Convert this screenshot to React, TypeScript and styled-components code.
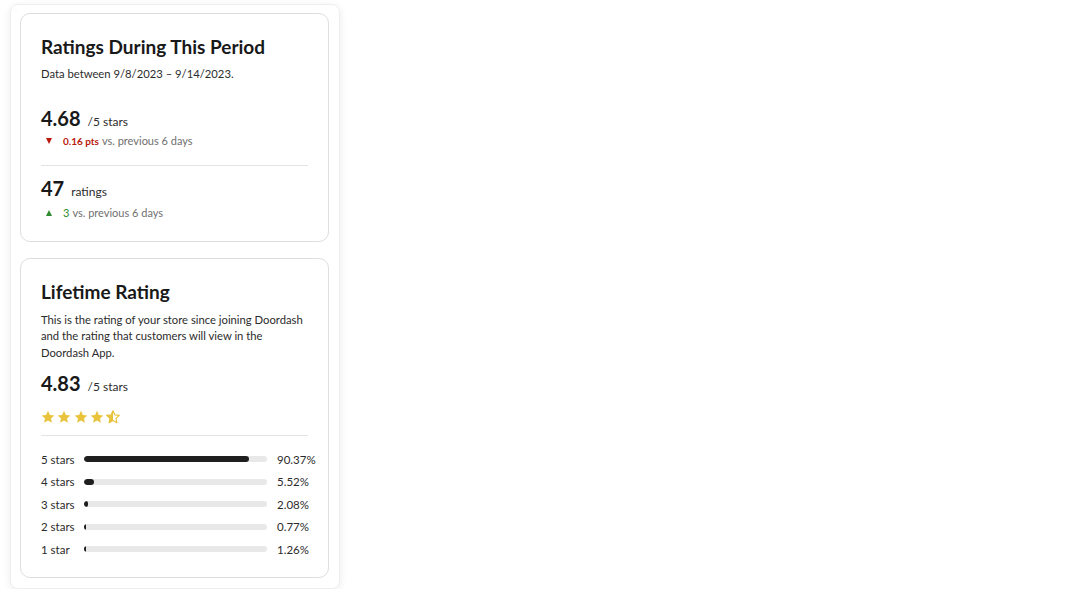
import React from 'react';
import styled, { createGlobalStyle } from 'styled-components';

const GlobalStyle = createGlobalStyle`
    body {
        margin: 0;
        background: #ffffff;
        font-family: "Lato", "Noto Sans", sans-serif;
        color: #191919;
    }
`

const Panel = styled.div`
    margin: 4px 0 0 10px;
    width: 330px;
    box-sizing: border-box;
    padding: 8px 10px 10px 9px;
    border-radius: 8px;
    border: 1px solid #eeeeee;
    box-shadow: 0 2px 8px rgba(0, 0, 0, 0.08);
    display: flex;
    flex-direction: column;
    gap: 16px;
`

const Card = styled.section`
    border: 1px solid #dedede;
    border-radius: 10px;
    padding: 20px 20px 21px;
`

const Title = styled.h2`
    margin: 0;
    font-size: 19px;
    font-weight: 700;
    line-height: 25px;
`

const Description = styled.p<{ $top: number }>`
    margin: ${p => p.$top}px 0 0;
    font-size: 11.25px;
    line-height: 16.5px;
    color: #2b2b2b;
`

const Score = styled.div<{ $top: number }>`
    margin-top: ${p => p.$top}px;
    font-size: 20px;
    line-height: 24px;
    height: 24px;
`

const Big = styled.span`
    font-weight: 700;
`

const Unit = styled.span`
    margin-left: 7px;
    font-size: 12px;
    line-height: 1;
    color: #2b2b2b;
`

const Change = styled.div<{ $top: number }>`
    margin-top: ${p => p.$top}px;
    padding-left: 5px;
    display: flex;
    align-items: center;
    font-size: 11px;
    line-height: 14px;
    color: #6f6f6f;
`

const Arrow = styled.span<{ $color: string; $up?: boolean }>`
    width: 0;
    height: 0;
    margin-right: 11px;
    border-left: 3.5px solid transparent;
    border-right: 3.5px solid transparent;
    ${p => p.$up
        ? `border-bottom: 6px solid ${p.$color};`
        : `border-top: 6px solid ${p.$color};`}
`

const Delta = styled.span<{ $color: string; $bold?: boolean }>`
    color: ${p => p.$color};
    font-weight: ${p => (p.$bold ? 700 : 400)};
    font-size: ${p => (p.$bold ? 10 : 11)}px;
    margin-right: 3px;
`

const Divider = styled.hr<{ $top: number }>`
    border: none;
    border-top: 1px solid #e4e4e4;
    margin: ${p => p.$top}px 0 0;
`

const Stars = styled.div`
    margin-top: 15px;
    display: flex;
    gap: 2.3px;
    height: 14px;
`

const Bars = styled.div`
    margin-top: 16px;
    display: flex;
    flex-direction: column;
    gap: 8.5px;
`

const BarRow = styled.div`
    display: grid;
    grid-template-columns: 36px 183px 1fr;
    column-gap: 7px;
    align-items: center;
    height: 14px;
    font-size: 11.5px;
    color: #2b2b2b;
    white-space: nowrap;

    & > span:last-child {
        margin-left: 3px;
    }
`

const Track = styled.div`
    height: 6px;
    border-radius: 3px;
    background: #e8e8e8;
    overflow: hidden;
`

const Fill = styled.div`
    height: 100%;
    min-width: 2px;
    border-radius: 3px;
    background: #1f1f1f;
`

const Star: React.FC<{ half?: boolean }> = ({ half }) => {
    const d = "M7 0.8l1.9 4.1 4.4 0.5-3.3 3 0.9 4.4L7 10.6l-3.9 2.2 0.9-4.4-3.3-3 4.4-0.5z";
    return (
        <svg width="14" height="14" viewBox="0 0 14 14">
            {half ? (
                <>
                    <defs>
                        <clipPath id="halfclip">
                            <rect x="0" y="0" width="7" height="14" />
                        </clipPath>
                    </defs>
                    <path d={d} fill="none" stroke="#e9c33b" strokeWidth="1.2" strokeLinejoin="round" />
                    <path d={d} fill="#e9c33b" clipPath="url(#halfclip)" />
                </>
            ) : (
                <path d={d} fill="#e9c33b" />
            )}
        </svg>
    );
}

const distribution = [
    { label: "5 stars", value: 90.37 },
    { label: "4 stars", value: 5.52 },
    { label: "3 stars", value: 2.08 },
    { label: "2 stars", value: 0.77 },
    { label: "1 star", value: 1.26 },
];

const App: React.FC = () => {
    return (
        <>
        <GlobalStyle />
        <Panel>
            <Card>
                <Title>Ratings During This Period</Title>
                <Description $top={7}>Data between 9/8/2023 – 9/14/2023.</Description>
                <Score $top={23}>
                    <Big>4.68</Big>
                    <Unit>/5 stars</Unit>
                </Score>
                <Change $top={4}>
                    <Arrow $color="#b8190c" />
                    <Delta $color="#b8190c" $bold>0.16 pts</Delta>
                    vs. previous 6 days
                </Change>
                <Divider $top={17} />
                <Score $top={10}>
                    <Big>47</Big>
                    <Unit>ratings</Unit>
                </Score>
                <Change $top={6}>
                    <Arrow $color="#2e8b2e" $up />
                    <Delta $color="#2e8b2e">3</Delta>
                    vs. previous 6 days
                </Change>
            </Card>
            <Card>
                <Title>Lifetime Rating</Title>
                <Description $top={8}>
                    This is the rating of your store since joining Doordash and the rating that customers will view in the Doordash App.
                </Description>
                <Score $top={10}>
                    <Big>4.83</Big>
                    <Unit>/5 stars</Unit>
                </Score>
                <Stars>
                    <Star />
                    <Star />
                    <Star />
                    <Star />
                    <Star half />
                </Stars>
                <Divider $top={11} />
                <Bars>
                    {distribution.map(row => (
                        <BarRow key={row.label}>
                            <span>{row.label}</span>
                            <Track>
                                <Fill style={{ width: `${row.value}%` }} />
                            </Track>
                            <span>{row.value.toFixed(2)}%</span>
                        </BarRow>
                    ))}
                </Bars>
            </Card>
        </Panel>
        </>
    )
}

export default App;
